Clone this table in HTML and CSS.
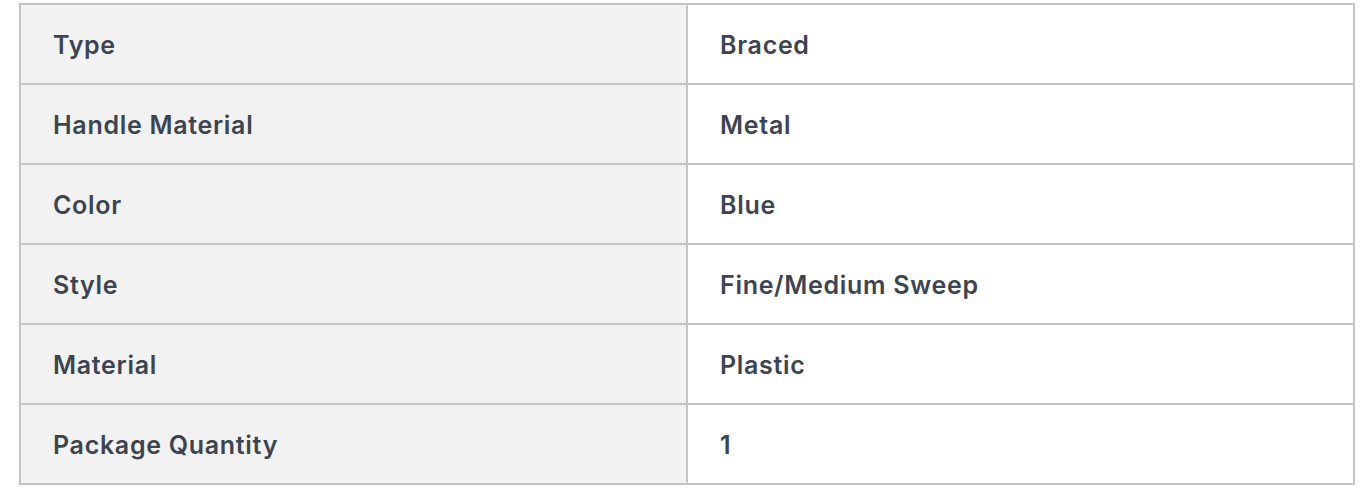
FILE: index.html
```html
<!DOCTYPE html>
<html>
<head>
<meta charset="utf-8">
<link rel="stylesheet" href="styles.css">
</head>
<body>
<table class="specs">
  <tbody>
    <tr><th>Type</th><td>Braced</td></tr>
    <tr><th>Handle Material</th><td>Metal</td></tr>
    <tr><th>Color</th><td>Blue</td></tr>
    <tr><th>Style</th><td>Fine/Medium Sweep</td></tr>
    <tr><th>Material</th><td>Plastic</td></tr>
    <tr><th>Package Quantity</th><td>1</td></tr>
  </tbody>
</table>
</body>
</html>
```
FILE: styles.css
```css
html, body {
  margin: 0;
  background: #ffffff;
}
body {
  padding: 3px 13px 0 19px;
  font-family: "Inter", "Noto Sans", sans-serif;
}
.specs {
  width: 1336px;
  border-collapse: collapse;
  table-layout: fixed;
  border: 2px solid #c4c4c4;
}
.specs th,
.specs td {
  height: 80px;
  box-sizing: border-box;
  border: 2px solid #c4c4c4;
  padding: 2px 32px 0;
  text-align: left;
  font-size: 25px;
  font-weight: 600;
  letter-spacing: 0.7px;
  color: #3d4451;
  vertical-align: middle;
}
.specs th {
  width: 667px;
  background: #f2f2f2;
}
.specs td {
  background: #ffffff;
}
```
